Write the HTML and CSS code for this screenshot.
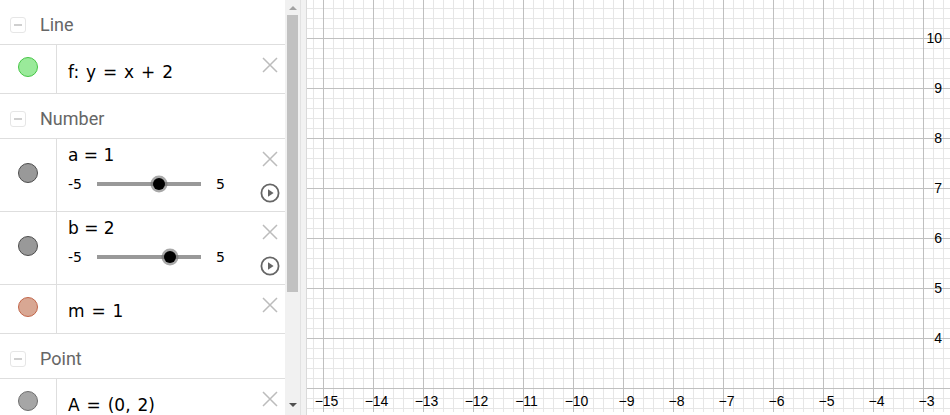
FILE: index.html
```html
<!DOCTYPE html>
<html>
<head>
<meta charset="utf-8">
<link rel="stylesheet" href="styles.css">
</head>
<body>
<div class="app">
  <div class="algebra">
    <div class="group-head"><span class="toggle"></span><span class="group-title">Line</span></div>
    <div class="row row-short">
      <div class="marker"><span class="dot dot-green"></span></div>
      <div class="content pad-f"><div class="formula math">f: y = x + 2</div></div>
      <div class="actions">
        <svg class="del" viewBox="0 0 16 16"><path d="M1 1 L15 15 M15 1 L1 15"/></svg>
      </div>
    </div>

    <div class="group-head"><span class="toggle"></span><span class="group-title">Number</span></div>
    <div class="row row-tall">
      <div class="marker"><span class="dot dot-gray"></span></div>
      <div class="content pad-slider">
        <div class="formula">a = 1</div>
        <div class="slider">
          <span class="smin">-5</span>
          <span class="track"><span class="knob" style="left: 60%"></span></span>
          <span class="smax">5</span>
        </div>
      </div>
      <div class="actions">
        <svg class="del" viewBox="0 0 16 16"><path d="M1 1 L15 15 M15 1 L1 15"/></svg>
        <svg class="play" viewBox="0 0 20 20"><circle cx="10" cy="10" r="8.6"/><path d="M8 6.3 L13.6 10 L8 13.7 Z"/></svg>
      </div>
    </div>
    <div class="row row-tall">
      <div class="marker"><span class="dot dot-gray"></span></div>
      <div class="content pad-slider">
        <div class="formula">b = 2</div>
        <div class="slider">
          <span class="smin">-5</span>
          <span class="track"><span class="knob" style="left: 70%"></span></span>
          <span class="smax">5</span>
        </div>
      </div>
      <div class="actions">
        <svg class="del" viewBox="0 0 16 16"><path d="M1 1 L15 15 M15 1 L1 15"/></svg>
        <svg class="play" viewBox="0 0 20 20"><circle cx="10" cy="10" r="8.6"/><path d="M8 6.3 L13.6 10 L8 13.7 Z"/></svg>
      </div>
    </div>
    <div class="row row-short">
      <div class="marker"><span class="dot dot-salmon"></span></div>
      <div class="content pad-m"><div class="formula math">m = 1</div></div>
      <div class="actions">
        <svg class="del" viewBox="0 0 16 16"><path d="M1 1 L15 15 M15 1 L1 15"/></svg>
      </div>
    </div>

    <div class="group-head"><span class="toggle"></span><span class="group-title">Point</span></div>
    <div class="row row-short">
      <div class="marker"><span class="dot dot-point"></span></div>
      <div class="content pad-m"><div class="formula math">A = (0, 2)</div></div>
      <div class="actions">
        <svg class="del" viewBox="0 0 16 16"><path d="M1 1 L15 15 M15 1 L1 15"/></svg>
      </div>
    </div>
  </div>

  <div class="scrollbar">
    <div class="arrow-zone"><span class="arrow-up"></span></div>
    <div class="thumb"></div>
    <div class="spacer"></div>
    <div class="arrow-zone bottom"><span class="arrow-down"></span></div>
  </div>

  <div class="splitter"></div>

  <div class="graphics">
    <svg class="labels" width="643" height="415" viewBox="0 0 643 415">
      <g class="xl">
        <text x="19.5" y="406">−15</text>
        <text x="69.5" y="406">−14</text>
        <text x="119.5" y="406">−13</text>
        <text x="169.5" y="406">−12</text>
        <text x="219.5" y="406">−11</text>
        <text x="269.5" y="406">−10</text>
        <text x="319.5" y="406">−9</text>
        <text x="369.5" y="406">−8</text>
        <text x="419.5" y="406">−7</text>
        <text x="469.5" y="406">−6</text>
        <text x="519.5" y="406">−5</text>
        <text x="569.5" y="406">−4</text>
        <text x="619.5" y="406">−3</text>
      </g>
      <g class="yl">
        <text x="635" y="43">10</text>
        <text x="635" y="93">9</text>
        <text x="635" y="143">8</text>
        <text x="635" y="193">7</text>
        <text x="635" y="243">6</text>
        <text x="635" y="293">5</text>
        <text x="635" y="343">4</text>
      </g>
    </svg>
  </div>
</div>
</body>
</html>
```

FILE: styles.css
```css
html, body {
  margin: 0;
  padding: 0;
  background: #ffffff;
}

body {
  width: 950px;
  height: 415px;
  overflow: hidden;
  font-family: "DejaVu Sans", sans-serif;
}

.app {
  display: flex;
  width: 950px;
  height: 415px;
  overflow: hidden;
}

/* ---------- Algebra view ---------- */
.algebra {
  width: 285px;
  flex: 0 0 285px;
  height: 415px;
  overflow: hidden;
  background: #ffffff;
}

.group-head {
  box-sizing: border-box;
  height: 45px;
  padding: 5px 0 0 10px;
  display: flex;
  align-items: center;
  border-bottom: 1px solid #dedede;
}

.toggle {
  box-sizing: border-box;
  width: 16px;
  height: 16px;
  border: 1px solid #e6e6e6;
  border-radius: 3px;
  margin-right: 14px;
  display: flex;
  align-items: center;
  justify-content: center;
}

.toggle::before {
  content: "";
  width: 8px;
  height: 2px;
  background: #cfcfcf;
}

.group-title {
  font-family: Roboto, "Liberation Sans", sans-serif;
  font-size: 18px;
  color: #666666;
}

.row {
  box-sizing: border-box;
  display: flex;
  border-bottom: 1px solid #dedede;
}

.row-short { height: 49px; }
.row-tall { height: 73px; }

.marker {
  box-sizing: border-box;
  width: 57px;
  flex: 0 0 57px;
  border-right: 1px solid #dedede;
  display: flex;
  align-items: center;
  justify-content: center;
  padding-bottom: 4px;
}

.dot {
  box-sizing: border-box;
  width: 20px;
  height: 20px;
  border-radius: 50%;
  border: 1px solid #555555;
}

.dot-green { background: #9aea9a; border-color: #46c646; }
.dot-gray { background: #999999; border-color: #4d4d4d; }
.dot-salmon { background: #d8a793; border-color: #c2664a; }
.dot-point { background: #a6a6a6; border-color: #6e6e6e; }

.content {
  flex: 1;
  padding-left: 11px;
  min-width: 0;
}

.pad-f { padding-top: 17px; }
.pad-m { padding-top: 16px; }
.pad-slider { padding-top: 6px; }

.formula {
  font-family: "DejaVu Sans", sans-serif;
  font-size: 17px;
  line-height: 20px;
  color: #000000;
  white-space: pre;
}

.formula.math {
  word-spacing: 1.5px;
}

.slider {
  display: flex;
  align-items: center;
  height: 20px;
  margin-top: 9px;
  font-size: 14px;
  line-height: 20px;
  color: #000000;
}

.smin {
  width: 29px;
}

.track {
  position: relative;
  width: 104px;
  height: 4px;
  background: #999999;
  margin-right: 15px;
}

.knob {
  position: absolute;
  top: 50%;
  width: 12px;
  height: 12px;
  margin: -6px 0 0 -6px;
  border-radius: 50%;
  background: #000000;
  box-shadow: 0 0 0 2.5px rgba(110, 110, 110, 0.6);
}

.actions {
  width: 20px;
  flex: 0 0 20px;
  margin-right: 5px;
  padding-top: 12px;
  display: flex;
  flex-direction: column;
  align-items: center;
  gap: 16px;
}

.del {
  width: 16px;
  height: 16px;
  display: block;
}

.del path {
  stroke: #bcbcbc;
  stroke-width: 1.5;
  fill: none;
}

.play {
  width: 20px;
  height: 20px;
  display: block;
}

.play circle {
  fill: none;
  stroke: #666666;
  stroke-width: 1.8;
}

.play path {
  fill: #666666;
}

/* ---------- Scrollbar ---------- */
.scrollbar {
  width: 15px;
  flex: 0 0 15px;
  height: 415px;
  background: #f1f1f1;
  display: flex;
  flex-direction: column;
  align-items: center;
}

.arrow-zone {
  height: 15px;
  width: 15px;
  display: flex;
  align-items: center;
  justify-content: center;
}

.arrow-zone.bottom {
  align-items: flex-start;
  padding-top: 3px;
  height: 12px;
}

.arrow-up {
  width: 0;
  height: 0;
  border-left: 4px solid transparent;
  border-right: 4px solid transparent;
  border-bottom: 4px solid #a3a3a3;
}

.arrow-down {
  width: 0;
  height: 0;
  border-left: 4px solid transparent;
  border-right: 4px solid transparent;
  border-top: 4px solid #505050;
}

.thumb {
  width: 11px;
  height: 277px;
  background: #c1c1c1;
}

.spacer {
  flex: 1;
}

/* ---------- Splitter ---------- */
.splitter {
  box-sizing: border-box;
  width: 7px;
  flex: 0 0 7px;
  height: 415px;
  background: #f2f2f2;
  border-left: 1px solid #e2e2e2;
  border-right: 1px solid #dadada;
}

/* ---------- Graphics view ---------- */
.graphics {
  position: relative;
  flex: 1;
  height: 412px;
  background-color: #ffffff;
  background-image:
    linear-gradient(to right, #c0c0c0 1px, transparent 1px),
    linear-gradient(to bottom, #c0c0c0 1px, transparent 1px),
    linear-gradient(to right, #e6e6e6 1px, transparent 1px),
    linear-gradient(to bottom, #e6e6e6 1px, transparent 1px);
  background-size: 50px 100%, 100% 50px, 10px 100%, 100% 10px;
  background-position: 16px 0, 0 38px, 6px 0, 0 8px;
}

.labels {
  position: absolute;
  left: 0;
  top: 0;
  overflow: visible;
}

.labels text {
  font-family: "Liberation Sans", Arial, sans-serif;
  font-size: 14px;
  fill: #000000;
}

.xl text { text-anchor: middle; }
.yl text { text-anchor: end; }
```
